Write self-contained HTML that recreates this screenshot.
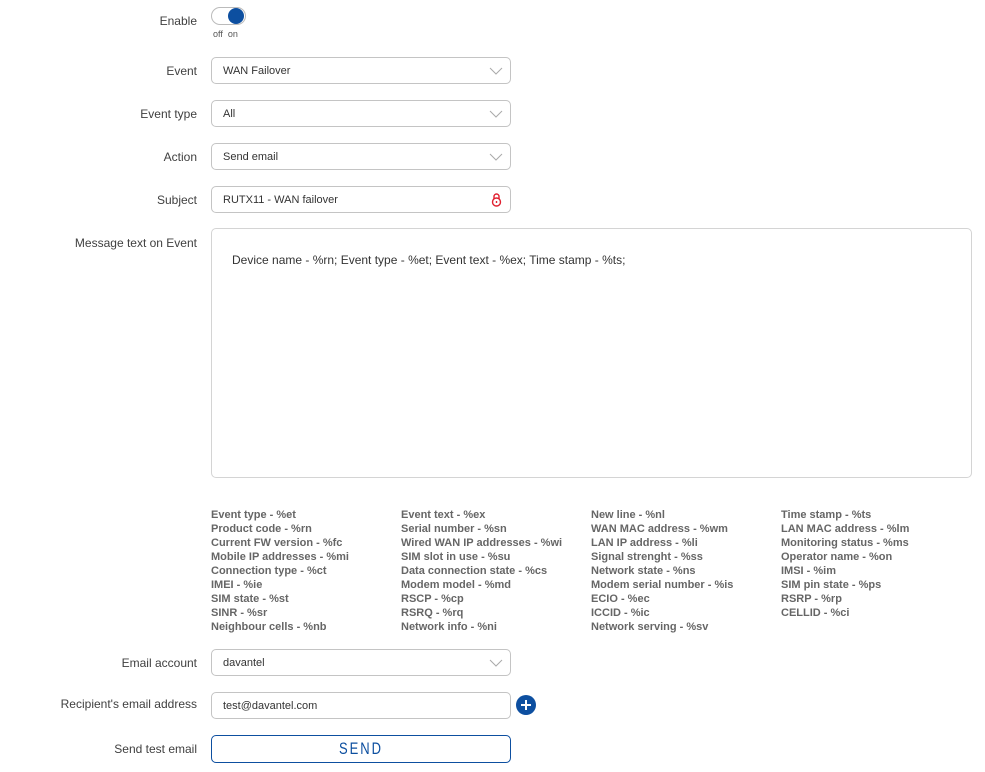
<!DOCTYPE html>
<html><head><meta charset="utf-8"><style>
*{box-sizing:border-box;margin:0;padding:0}
body{width:985px;height:772px;background:#fff;font-family:"Liberation Sans",sans-serif;color:#404040;position:relative;overflow:hidden}
.lbl{position:absolute;right:788px;font-size:12px;color:#404040;text-align:right;white-space:nowrap}
.box{position:absolute;left:211px;width:300px;height:27px;border:1px solid #c4c4c4;border-radius:5px;font-size:11px;color:#333;padding:1px 11px 0;display:flex;align-items:center}
.arr{position:absolute;right:7px;top:9px}
.vars{position:absolute;top:508px;font-size:11px;font-weight:bold;color:#666;line-height:14px;white-space:nowrap}
</style></head><body>
<div class="lbl" style="top:14px">Enable</div>
<div style="position:absolute;left:211px;top:7px;width:35px;height:18px;border:1px solid #bbb;border-radius:9px"></div>
<div style="position:absolute;left:228px;top:8px;width:16px;height:16px;border-radius:50%;background:#0d4fa0"></div>
<div style="position:absolute;left:213px;top:29px;font-size:9px;color:#555">off&nbsp;&nbsp;on</div>

<div class="lbl" style="top:64px">Event</div>
<div class="box" style="top:57px">WAN Failover<svg class="arr" width="14" height="9"><path d="M1 1l6 6 6-6" stroke="#aaa" fill="none" stroke-width="1"/></svg></div>
<div class="lbl" style="top:107px">Event type</div>
<div class="box" style="top:100px">All<svg class="arr" width="14" height="9"><path d="M1 1l6 6 6-6" stroke="#aaa" fill="none" stroke-width="1"/></svg></div>
<div class="lbl" style="top:150px">Action</div>
<div class="box" style="top:143px">Send email<svg class="arr" width="14" height="9"><path d="M1 1l6 6 6-6" stroke="#aaa" fill="none" stroke-width="1"/></svg></div>
<div class="lbl" style="top:193px">Subject</div>
<div class="box" style="top:186px">RUTX11 - WAN failover<svg style="position:absolute;right:8px;top:5px" width="11" height="15"><path d="M3 7V4.5a2.5 2.5 0 0 1 5 0V7" stroke="#e02030" fill="none" stroke-width="1.4"/><circle cx="5.5" cy="10" r="4" stroke="#e02030" fill="none" stroke-width="1.4"/><path d="M5.5 9v2" stroke="#e02030" stroke-width="1.4"/></svg></div>

<div class="lbl" style="top:236px">Message text on Event</div>
<div style="position:absolute;left:211px;top:228px;width:761px;height:250px;border:1px solid #d4d4d4;border-radius:5px;font-size:12px;color:#333;padding:24px 20px">Device name - %rn; Event type - %et; Event text - %ex; Time stamp - %ts;</div>

<div class="vars" style="left:211px">Event type - %et<br>Product code - %rn<br>Current FW version - %fc<br>Mobile IP addresses - %mi<br>Connection type - %ct<br>IMEI - %ie<br>SIM state - %st<br>SINR - %sr<br>Neighbour cells - %nb</div>
<div class="vars" style="left:401px">Event text - %ex<br>Serial number - %sn<br>Wired WAN IP addresses - %wi<br>SIM slot in use - %su<br>Data connection state - %cs<br>Modem model - %md<br>RSCP - %cp<br>RSRQ - %rq<br>Network info - %ni</div>
<div class="vars" style="left:591px">New line - %nl<br>WAN MAC address - %wm<br>LAN IP address - %li<br>Signal strenght - %ss<br>Network state - %ns<br>Modem serial number - %is<br>ECIO - %ec<br>ICCID - %ic<br>Network serving - %sv</div>
<div class="vars" style="left:781px">Time stamp - %ts<br>LAN MAC address - %lm<br>Monitoring status - %ms<br>Operator name - %on<br>IMSI - %im<br>SIM pin state - %ps<br>RSRP - %rp<br>CELLID - %ci</div>

<div class="lbl" style="top:656px">Email account</div>
<div class="box" style="top:649px">davantel<svg class="arr" width="14" height="9"><path d="M1 1l6 6 6-6" stroke="#aaa" fill="none" stroke-width="1"/></svg></div>
<div class="lbl" style="top:697px">Recipient's email address</div>
<div class="box" style="top:692px">test@davantel.com</div>
<svg style="position:absolute;left:516px;top:695px" width="20" height="20"><circle cx="10" cy="10" r="10" fill="#0d4fa0"/><path d="M10 5v10M5 10h10" stroke="#fff" stroke-width="2"/></svg>
<div class="lbl" style="top:742px">Send test email</div>
<div style="position:absolute;left:211px;top:735px;width:300px;height:28px;border:1px solid #0d4fa0;border-radius:5px;text-align:center;line-height:26px;font-size:13px;color:#0d4fa0;letter-spacing:2px;font-family:'Liberation Sans Narrow','Liberation Sans',sans-serif"><span style="display:inline-block;transform:scaleY(1.3)">SEND</span></div>
</body></html>
